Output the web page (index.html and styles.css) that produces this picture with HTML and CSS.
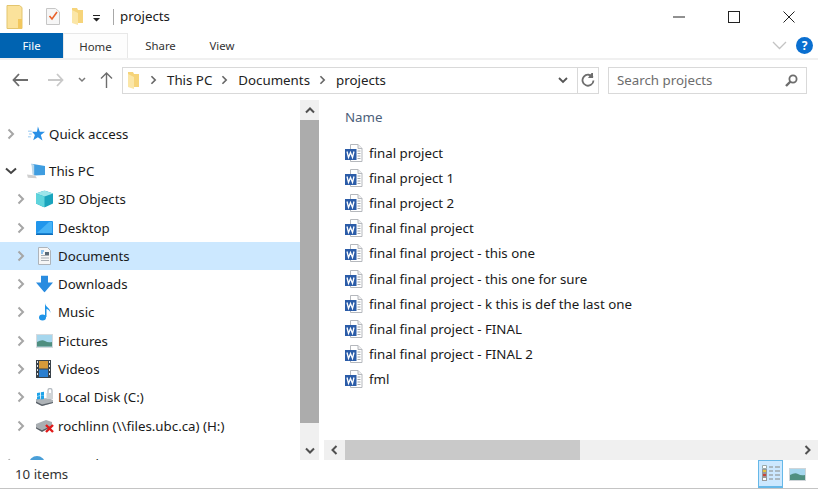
FILE: index.html
```html
<!DOCTYPE html>
<html lang="en">
<head>
<meta charset="utf-8">
<title>projects</title>
<link rel="stylesheet" href="styles.css">
</head>
<body>
<svg class="defs" width="0" height="0" aria-hidden="true">
  <symbol id="chev-r" viewBox="0 0 8 12"><path d="M1.500 1.500 6 6l-4.500 4.500" fill="none" stroke="currentColor" stroke-width="2"/></symbol>
  <symbol id="word" viewBox="0 0 18 18">
    <path d="M5.500.5h7.500l4 4v13h-11.500z" fill="#fff" stroke="#b5b8bd"/>
    <path d="M13 .5v4h4" fill="#eee" stroke="#b5b8bd"/>
    <path d="M12.500 7h3M12.500 9.500h3M12.500 12h3M12.500 14.500h3" stroke="#a4a9af"/>
    <rect x="0" y="5" width="11.500" height="11" fill="#2b5ca8"/>
    <path d="M2 7.500 3.500 13.500 5.500 8.500 7.500 13.500 9 7.500" fill="none" stroke="#fff" stroke-width="1.300"/>
  </symbol>
</svg>

<div class="window">
  <header class="titlebar">
    <svg class="tb-folder" width="17" height="24" viewBox="0 0 17 24"><path d="M1 .5h12.500l2.500 2v21H1z" fill="#fbe29b" stroke="#e3c56f"/><path d="M12 14h4v9.500h-4z" fill="#f2c75e"/></svg>
    <span class="tb-sep"></span>
    <svg class="tb-check" width="14" height="17" viewBox="0 0 14 17"><path d="M.5.500h9l4 3.500v12.500H.5z" fill="#f6f6f6" stroke="#c6c6c6"/><path d="M3.500 8 6 11l5-7" fill="none" stroke="#e8622c" stroke-width="1.600"/></svg>
    <svg class="tb-small-folder" width="11" height="17" viewBox="0 0 11 17"><path d="M0 0h5l1 2h5v13H0z" fill="#f6d47a"/><path d="M0 2 6 5v12l-6-2z" fill="#fbe6a7"/></svg>
    <svg class="tb-drop" width="8" height="7" viewBox="0 0 8 7"><path d="M0 0h7v1H0zM0 3h7L3.500 6.500z" fill="#222"/></svg>
    <span class="tb-sep tb-sep-2"></span>
    <span class="tb-name">projects</span>
    <div class="caption">
      <svg width="12" height="2" viewBox="0 0 12 2"><path d="M0 1h12" stroke="#222"/></svg>
      <svg class="cap-max" width="12" height="12" viewBox="0 0 12 12"><rect x=".5" y=".5" width="11" height="11" fill="none" stroke="#222"/></svg>
      <svg width="12" height="12" viewBox="0 0 12 12"><path d="M.5.500l11 11M11.500.500l-11 11" stroke="#222"/></svg>
    </div>
  </header>

  <nav class="tabs">
    <span class="tab tab-file">File</span>
    <span class="tab tab-home">Home</span>
    <span class="tab tab-share">Share</span>
    <span class="tab tab-view">View</span>
    <div class="tabs-right">
      <svg width="15" height="9" viewBox="0 0 15 9"><path d="M1 1l6.500 6.500L14 1" fill="none" stroke="#c3c3c3" stroke-width="1.300"/></svg>
      <span class="help">?</span>
    </div>
  </nav>

  <div class="addressrow">
    <div class="navbtns">
      <svg width="16" height="14" viewBox="0 0 16 14"><path d="M7 1 1.500 7 7 13M2 7h14" fill="none" stroke="#6d6d6d" stroke-width="1.800"/></svg>
      <svg class="fwd" width="16" height="14" viewBox="0 0 16 14"><path d="M9 1l5.500 6L9 13M14 7H0" fill="none" stroke="#c9c9c9" stroke-width="1.800"/></svg>
      <svg class="recent" width="8" height="6" viewBox="0 0 8 6"><path d="M1 1l3 3 3-3" fill="none" stroke="#7a7a7a" stroke-width="1.500"/></svg>
      <svg class="up" width="13" height="16" viewBox="0 0 13 16"><path d="M1 6.500 6.500 1 12 6.500M6.500 1.500V16" fill="none" stroke="#6d6d6d" stroke-width="1.400"/></svg>
    </div>
    <div class="address">
      <svg class="addr-folder" width="11" height="17" viewBox="0 0 11 17"><path d="M0 0h5l1 2h5v13H0z" fill="#f6d47a"/><path d="M0 2 6 5v12l-6-2z" fill="#fbe6a7"/></svg>
      <svg class="crumb-chev" width="7" height="10"><use href="#chev-r"/></svg>
      <span class="crumb">This PC</span>
      <svg class="crumb-chev" width="7" height="10"><use href="#chev-r"/></svg>
      <span class="crumb">Documents</span>
      <svg class="crumb-chev" width="7" height="10"><use href="#chev-r"/></svg>
      <span class="crumb">projects</span>
      <svg class="addr-drop" width="10" height="7" viewBox="0 0 10 7"><path d="M1 1l4 4 4-4" fill="none" stroke="#555" stroke-width="1.800"/></svg>
      <span class="addr-refresh">
        <svg width="14" height="14" viewBox="0 0 14 14"><path d="M11.800 4.500A5.500 5.500 0 1 0 12.500 7.500" fill="none" stroke="#6d6d6d" stroke-width="1.800"/><path d="M8 0h1.500v5H4.500z" fill="#6d6d6d" transform="translate(2.500 0)"/></svg>
      </span>
    </div>
    <div class="search">
      <span>Search projects</span>
      <svg width="13" height="13" viewBox="0 0 13 13"><circle cx="8" cy="5" r="3.600" fill="none" stroke="#6d6d6d" stroke-width="1.800"/><path d="M5.500 7.500 1 12" stroke="#6d6d6d" stroke-width="2.400"/></svg>
    </div>
  </div>

  <main class="main">
    <aside class="navpane">
      <ul class="tree">
        <li class="row row-top">
          <svg class="exp" width="8" height="12"><use href="#chev-r"/></svg>
          <svg class="ico" width="17" height="17" viewBox="0 0 18 18"><path d="M10.500 1l2 5.500H18l-4.400 3.500 1.700 6-4.800-3.500-5 3 1.800-5.500-3-3.500h5.200z" fill="#2a90e6"/><path d="M0 6h4M1 9h3M0 12h3" stroke="#8fc5f0"/></svg>
          <span>Quick access</span>
        </li>
        <li class="row row-pc">
          <svg class="exp exp-open" width="12" height="8" viewBox="0 0 12 8"><path d="M1 1.500 6 6l5-4.500" fill="none" stroke="#444" stroke-width="2"/></svg>
          <svg class="ico ico-pc" width="18" height="17" viewBox="0 0 20 18"><path d="M5 1l15 2.500v10L8 14z" fill="#3f9de0"/><path d="M5 1l3 1v12l-2-1z" fill="#bcd8ea"/><path d="M0 13l9 1 2 3-10-.500z" fill="#cfcfcf"/></svg>
          <span>This PC</span>
        </li>
        <li class="row sub">
          <svg class="exp" width="8" height="12"><use href="#chev-r"/></svg>
          <svg class="ico" width="17" height="17" viewBox="0 0 17 17"><path d="M8.500 0 17 3v10l-8.500 4L0 13V3z" fill="#1aa4bd"/><path d="M8.500 0 17 3l-8.500 3L0 3z" fill="#9ce5ea"/><path d="M0 3l8.500 3v11L0 13z" fill="#5fd4dc"/></svg>
          <span>3D Objects</span>
        </li>
        <li class="row sub">
          <svg class="exp" width="8" height="12"><use href="#chev-r"/></svg>
          <svg class="ico" width="17" height="14" viewBox="0 0 17 14"><rect width="17" height="13" rx="1" fill="#2196ec"/><path d="M1 12 13 1h3v11z" fill="#47b3f6"/><rect y="12.500" width="17" height="1.500" fill="#0f6cb8"/></svg>
          <span>Desktop</span>
        </li>
        <li class="row sub row-sel">
          <svg class="exp" width="8" height="12"><use href="#chev-r"/></svg>
          <svg class="ico" width="17" height="18" viewBox="0 0 17 18"><path d="M2.500.5h9l3 3v14h-12z" fill="#f6f6f6" stroke="#aeb4ba"/><path d="M5 4h3M5 6h2" stroke="#2a90e6"/><path d="M5 8.500h8M5 11h8M5 13.500h8" stroke="#a8adb3"/><rect x="9" y="5" width="4" height="3" fill="#5a6a78"/></svg>
          <span>Documents</span>
        </li>
        <li class="row sub">
          <svg class="exp" width="8" height="12"><use href="#chev-r"/></svg>
          <svg class="ico" width="17" height="17" viewBox="0 0 17 17"><path d="M5 0h7v7h5l-8.500 10L0 7h5z" fill="#2a8ce0"/></svg>
          <span>Downloads</span>
        </li>
        <li class="row sub">
          <svg class="exp" width="8" height="12"><use href="#chev-r"/></svg>
          <svg class="ico" width="17" height="18" viewBox="0 0 17 18"><ellipse cx="6.500" cy="14.500" rx="3.500" ry="3" fill="#1e94e8"/><path d="M9 14V0c0 4 5.500 4.500 5.500 10-1-3-3-4-4-4v8z" fill="#1e94e8"/></svg>
          <span>Music</span>
        </li>
        <li class="row sub">
          <svg class="exp" width="8" height="12"><use href="#chev-r"/></svg>
          <svg class="ico" width="17" height="14" viewBox="0 0 17 14"><rect width="17" height="14" fill="#d5dade"/><rect x="1" y="1" width="15" height="11.500" fill="#a6d7ee"/><path d="M1 8q5-3 8-1t7 1v4.500H1z" fill="#4f8f80"/></svg>
          <span>Pictures</span>
        </li>
        <li class="row sub">
          <svg class="exp" width="8" height="12"><use href="#chev-r"/></svg>
          <svg class="ico" width="15" height="18" viewBox="0 0 15 18"><rect width="15" height="18" fill="#39424a"/><rect x="3" y="1" width="9" height="7.500" fill="#d79a3a"/><rect x="3" y="9.500" width="9" height="7.500" fill="#2b7fd0"/><path d="M1 1h1v2H1zM1 5h1v2H1zM1 9h1v2H1zM1 13h1v2H1zM13 1h1v2h-1zM13 5h1v2h-1zM13 9h1v2h-1zM13 13h1v2h-1z" fill="#e9e9e9"/></svg>
          <span>Videos</span>
        </li>
        <li class="row sub row-disk">
          <svg class="exp" width="8" height="12"><use href="#chev-r"/></svg>
          <svg class="ico" width="18" height="18" viewBox="0 0 18 18"><path d="M0 11l12-1 5 2v3L6 18 0 15z" fill="#aeb3b7"/><path d="M0 15l6 3 11-3v-1L6 16.500 0 13.500z" fill="#596068"/><path d="M1 5l3-.500v3l-3 .500zM4.800 4.300 8 3.800v3.400l-3.200.500zM1 8.500l3-.500v3l-3 .500zM4.800 8l3.200-.500V11l-3.200.500z" fill="#1fa3e8"/><path d="M12 5V2.500a2 2 0 0 1 4 0V5" fill="none" stroke="#b6bcc2" stroke-width="1.300"/><rect x="10.500" y="5" width="6.500" height="6" fill="#cfd3d6"/></svg>
          <span>Local Disk (C:)</span>
        </li>
        <li class="row sub row-net">
          <svg class="exp" width="8" height="12"><use href="#chev-r"/></svg>
          <svg class="ico" width="19" height="14" viewBox="0 0 19 14"><path d="M0 5l10-4 6 2v3L6 11 0 8z" fill="#a9aeb2"/><path d="M0 8l6 3 10-5v1.500L6 13 0 9.500z" fill="#5b6167"/><path d="M10 6l7 7M17 6l-7 7" stroke="#e11a1a" stroke-width="2.400"/></svg>
          <span>rochlinn (\\files.ubc.ca) (H:)</span>
        </li>
        <li class="row row-network">
          <svg class="exp" width="8" height="12"><use href="#chev-r"/></svg>
          <svg class="ico" width="18" height="18" viewBox="0 0 18 18"><circle cx="9" cy="9" r="8" fill="#4a9fd8"/></svg>
          <span>Network</span>
        </li>
      </ul>
    </aside>

    <div class="vscroll">
      <span class="sb-btn"><svg width="10" height="7" viewBox="0 0 10 7"><path d="M1 5.500 5 1.500l4 4" fill="none" stroke="#505050" stroke-width="2"/></svg></span>
      <span class="sb-thumb"></span>
      <span class="sb-btn sb-btn-end"><svg width="10" height="7" viewBox="0 0 10 7"><path d="M1 1.500l4 4 4-4" fill="none" stroke="#505050" stroke-width="2"/></svg></span>
    </div>

    <section class="content">
      <div class="filearea">
        <div class="colhead">Name</div>
        <ul class="files">
          <li><svg width="18" height="18"><use href="#word"/></svg><span>final project</span></li>
          <li><svg width="18" height="18"><use href="#word"/></svg><span>final project 1</span></li>
          <li><svg width="18" height="18"><use href="#word"/></svg><span>final project 2</span></li>
          <li><svg width="18" height="18"><use href="#word"/></svg><span>final final project</span></li>
          <li><svg width="18" height="18"><use href="#word"/></svg><span>final final project - this one</span></li>
          <li><svg width="18" height="18"><use href="#word"/></svg><span>final final project - this one for sure</span></li>
          <li><svg width="18" height="18"><use href="#word"/></svg><span>final final project - k this is def the last one</span></li>
          <li><svg width="18" height="18"><use href="#word"/></svg><span>final final project - FINAL</span></li>
          <li><svg width="18" height="18"><use href="#word"/></svg><span>final final project - FINAL 2</span></li>
          <li><svg width="18" height="18"><use href="#word"/></svg><span>fml</span></li>
        </ul>
      </div>
      <div class="hscroll">
        <span class="hs-btn"><svg width="7" height="10" viewBox="0 0 7 10"><path d="M5.500 1 1.500 5l4 4" fill="none" stroke="#505050" stroke-width="2"/></svg></span>
        <span class="hs-thumb"></span>
        <span class="hs-btn hs-btn-end"><svg width="7" height="10" viewBox="0 0 7 10"><path d="M1.500 1l4 4-4 4" fill="none" stroke="#505050" stroke-width="2"/></svg></span>
      </div>
    </section>
  </main>

  <footer class="status">
    <span class="count">10 items</span>
    <div class="views">
      <span class="view view-on">
        <svg width="18" height="17" viewBox="0 0 18 17"><path d="M.5.500h4v3h-4z" fill="#fff" stroke="#99aaaa"/><path d="M7 2h4M13 2h5M7 6h4M13 6h5M7 10h4M13 10h5M7 14h4M13 14h5" stroke="#9fa8ad" stroke-width="1.500"/><rect x=".5" y="4.500" width="4" height="3" fill="#e5c33c" stroke="#999"/><rect x=".5" y="8.500" width="4" height="3" fill="#c8433a" stroke="#999"/><rect x=".5" y="12.500" width="4" height="3" fill="#fff" stroke="#999"/></svg>
      </span>
      <span class="view view-large">
        <svg width="17" height="13" viewBox="0 0 17 13"><rect width="17" height="13" fill="#cfd5d9"/><rect x="1" y="1" width="15" height="11" fill="#a6d7ee"/><path d="M1 7q5-3 8-1t7 1v5H1z" fill="#4f8f80"/></svg>
      </span>
    </div>
  </footer>
</div>
</body>
</html>
```

FILE: styles.css
```css
* { box-sizing: border-box; }
html, body { margin: 0; padding: 0; }
body {
  width: 818px;
  height: 490px;
  overflow: hidden;
  background: #fff;
  font-family: "Noto Sans", "Open Sans", sans-serif;
  font-size: 13.3px;
  color: #1a1a1a;
}
.defs { position: absolute; }
svg { display: block; flex: none; }
ul { list-style: none; margin: 0; padding: 0; }

.window { display: flex; flex-direction: column; height: 489px; border-bottom: 1px solid #c4c4c4; }

/* title bar */
.titlebar { height: 33px; display: flex; align-items: center; padding-left: 6px; }
.tb-sep { width: 1px; height: 16px; background: #a8a8a8; margin-left: 6px; }
.tb-check { margin-left: 16px; }
.tb-small-folder { margin-left: 12px; }
.tb-drop { margin-left: 10px; margin-top: 3px; }
.tb-sep-2 { margin-left: 12px; }
.tb-name { margin-left: 6px; padding-bottom: 1px; }
.caption { margin-left: auto; display: flex; align-items: center; padding-right: 23px; }
.cap-max { margin: 0 43px; }

/* tabs */
.tabs { height: 27px; display: flex; align-items: stretch; border-bottom: 2px solid #f0f0f0; font-size: 11.4px; color: #333; }
.tab { display: flex; align-items: center; justify-content: center; }
.tab-file { width: 63px; background: #0063b1; color: #fff; }
.tab-home { width: 65px; background: #fdfdfd; border: 1px solid #e8e8e8; border-bottom: 0; }
.tab-share { width: 65px; }
.tab-view { width: 58px; }
.tabs-right { margin-left: auto; display: flex; align-items: center; gap: 9px; padding-right: 5px; }
.help { width: 17px; height: 17px; border-radius: 50%; background: #0a6fd0; color: #fff; font-weight: 700; font-size: 12px; line-height: 17px; text-align: center; }

/* address row */
.addressrow { height: 40px; display: flex; align-items: center; }
.navbtns { display: flex; align-items: center; padding-left: 12px; width: 122px; }
.fwd { margin-left: 20px; }
.recent { margin-left: 14px; }
.up { margin-left: 14px; }
.address { width: 477px; height: 27px; border: 1px solid #d9d9d9; display: flex; align-items: center; padding-left: 5px; color: #222; }
.addr-folder { margin-right: 11px; }
.crumb-chev { color: #666; margin-right: 10px; }
.crumb { margin-right: 9px; }
.addr-drop { margin-left: auto; margin-right: 9px; }
.addr-refresh { width: 21px; height: 100%; border-left: 1px solid #d9d9d9; display: flex; align-items: center; justify-content: center; }
.search { width: 199px; height: 27px; margin-left: 9px; border: 1px solid #d9d9d9; display: flex; align-items: center; justify-content: space-between; padding: 0 8px; color: #6d6d6d; }

/* main */
.main { flex: none; height: 360px; display: flex; }
.navpane { width: 300px; overflow: hidden; }
.tree { padding-top: 19.500px; }
.row { height: 28.3px; display: flex; align-items: center; position: relative; }
.row .exp { color: #a6a6a6; margin-left: 7px; }
.row .ico { position: absolute; top: 50%; transform: translateY(-50%); left: 28px; }
.row > span { margin-left: 34px; }
.row-pc { margin-top: 9px; }
.row-pc .exp-open { margin-left: 5px; }
.row-pc .ico-pc { left: 27px; }
.row-pc > span { margin-left: 32px; }
.sub .exp { margin-left: 17px; }
.sub .ico { left: 36px; }
.sub > span { margin-left: 33px; }
.row-sel { background: #cce8ff; }
.row-network { margin-top: 10px; }

.vscroll { width: 19px; background: #f0f0f0; display: flex; flex-direction: column; }
.sb-btn { height: 20px; display: flex; align-items: center; justify-content: center; }
.sb-thumb { height: 303px; background: #acacac; }
.sb-btn-end { margin-top: auto; }

.content { flex: 1; min-width: 0; margin-left: 5px; display: flex; flex-direction: column; }
.filearea { flex: 1; padding: 7px 0 0 21px; }
.colhead { color: #4c607a; height: 21px; line-height: 21px; }
.files { margin-top: 12.500px; }
.files li { height: 25.1px; display: flex; align-items: center; gap: 6px; }
.files span { white-space: nowrap; }

.hscroll { height: 20px; background: #f0f0f0; display: flex; }
.hs-btn { width: 21px; display: flex; align-items: center; justify-content: center; }
.hs-thumb { width: 235px; background: #c9c9c9; }
.hs-btn-end { margin-left: auto; }

/* status bar */
.status { flex: 1; display: flex; align-items: center; justify-content: space-between; padding-left: 15px; color: #333; }
.views { display: flex; align-self: stretch; padding-right: 6px; align-items: stretch; }
.view { width: 25px; display: flex; align-items: center; justify-content: center; }
.view-large { width: 29px; }
.view-on { background: #cce8ff; border: 1px solid #66b8e8; border-bottom-width: 2px; }
```
